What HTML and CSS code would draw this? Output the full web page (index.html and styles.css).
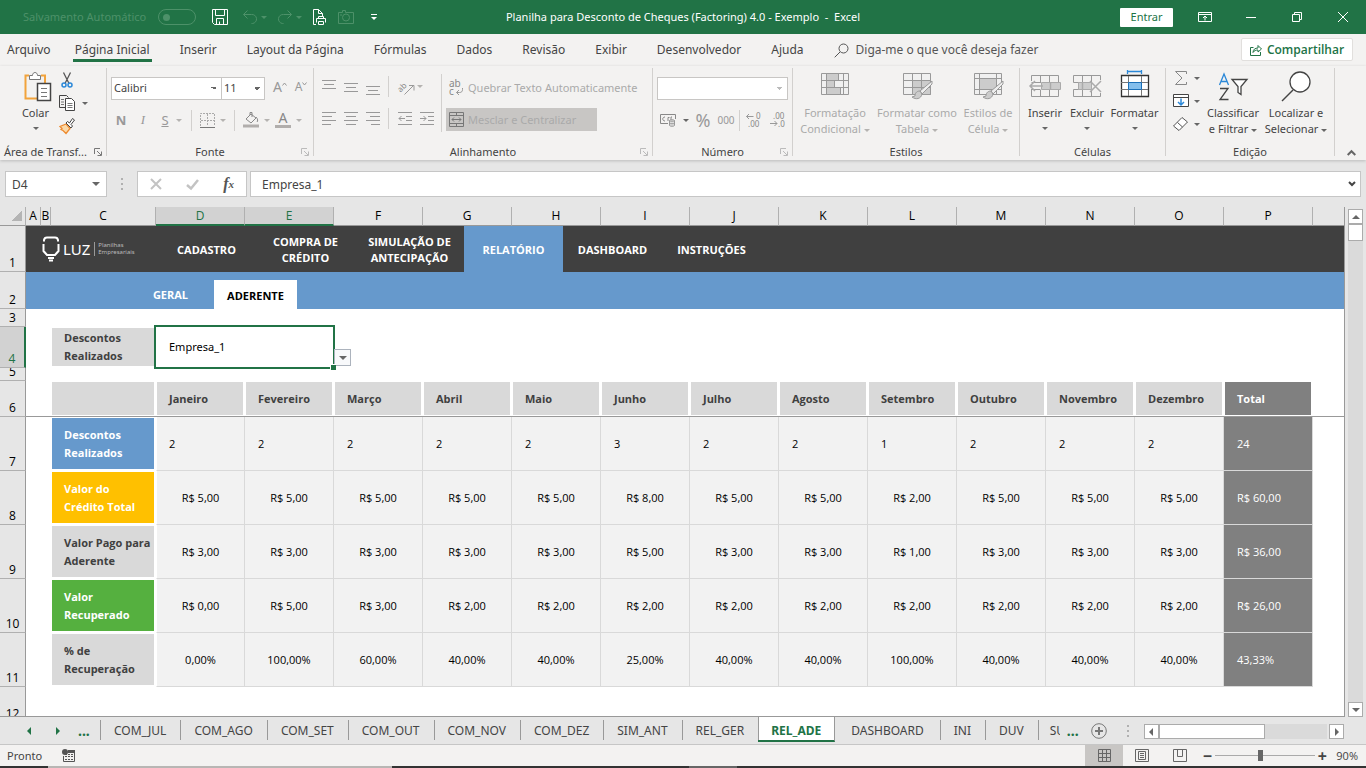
FILE: index.html
```html
<!DOCTYPE html>
<html lang="pt-BR">
<head>
<meta charset="utf-8">
<title>Planilha para Desconto de Cheques (Factoring) 4.0 - Exemplo - Excel</title>
<link rel="stylesheet" href="styles.css">
</head>
<body>
<header class="titlebar">
  <div class="quick">
    <label class="autosave">Salvamento Automático <input type="checkbox" class="toggle" disabled></label>
    <button class="qb save" aria-label="Salvar"><svg width="16" height="16" viewBox="0 0 16 16"><path d="M.5.5h15v15h-13l-2-2zM3.500.5v6h9v-6M4.500 15.500v-6h7v6M7.500 15v-2.500"/></svg></button>
    <button class="qb dim" aria-label="Desfazer"><svg width="16" height="16" viewBox="0 0 16 16"><path d="M5.500 1.500l-4 4 4 4M1.500 5.500h8a4.500 4.500 0 0 1 1 9h-1"/></svg><i class="caret"></i></button>
    <button class="qb dim" aria-label="Refazer"><svg width="16" height="16" viewBox="0 0 16 16"><path d="M10.500 1.500l4 4-4 4M14.500 5.500h-8a4.500 4.500 0 0 0-1 9h1"/></svg><i class="caret"></i></button>
    <button class="qb" aria-label="Imprimir"><svg width="16" height="16" viewBox="0 0 16 16"><path d="M4 15.500H1.500V.5h5l4 4v3M6.500.5v4h4M6.500 10V7.500h5V10M4.500 13.500v-4h9v4M6.500 12.500h5v3h-5z"/></svg></button>
    <button class="qb dim" aria-label="Câmera"><svg width="16" height="14" viewBox="0 0 16 14"><path d="M.5 2.500h4v-2h3v2h8v11H.5z"/><circle cx="8" cy="7.500" r="3.500"/><path d="M2 5h2"/></svg></button>
    <button class="qb more" aria-label="Personalizar"><svg width="6" height="8" viewBox="0 0 6 8"><path d="M0 1.500h6"/><path class="fill" d="M0 4h6L3 7z"/></svg></button>
  </div>
  <h1 class="title">Planilha para Desconto de Cheques (Factoring) 4.0 - Exemplo &nbsp;-&nbsp; Excel</h1>
  <div class="wincontrols">
    <button class="signin">Entrar</button>
    <button class="wb" aria-label="Opções da faixa"><svg width="14" height="12" viewBox="0 0 14 12"><path d="M.5 1.500h13v9H.5zM1 3.500h12M7 9.500V5.500M5 7l2-2 2 2"/></svg></button>
    <button class="wb" aria-label="Minimizar"><svg width="12" height="12" viewBox="0 0 12 12"><path d="M1 6.500h10"/></svg></button>
    <button class="wb" aria-label="Restaurar"><svg width="12" height="12" viewBox="0 0 12 12"><path d="M1.500 3.500h7v7h-7zM3.500 3V1.500h7v7H9"/></svg></button>
    <button class="wb" aria-label="Fechar"><svg width="12" height="12" viewBox="0 0 12 12"><path d="M1 1l10 10M11 1L1 11"/></svg></button>
  </div>
</header>

<nav class="tabs">
  <a href="#" class="tab first">Arquivo</a>
  <a href="#" class="tab on">Página Inicial</a>
  <a href="#" class="tab">Inserir</a>
  <a href="#" class="tab">Layout da Página</a>
  <a href="#" class="tab">Fórmulas</a>
  <a href="#" class="tab">Dados</a>
  <a href="#" class="tab">Revisão</a>
  <a href="#" class="tab">Exibir</a>
  <a href="#" class="tab">Desenvolvedor</a>
  <a href="#" class="tab">Ajuda</a>
  <a href="#" class="tab tell"><svg width="15" height="15" viewBox="0 0 15 15"><circle cx="9.500" cy="5.500" r="4.500"/><path d="M6 9L.7 14.300"/></svg>Diga-me o que você deseja fazer</a>
  <button class="share"><svg width="12" height="12" viewBox="0 0 12 12"><path d="M3.500 3.500h-3v8h10V8M3 8.500c0-3 2-4.500 5-4.500V1.500l3.500 3.500L8 8V6C6 6 4 6.500 3 8.500z"/></svg>Compartilhar</button>
</nav>

<section class="ribbon">
  <div class="group g-clip">
    <div class="gbody">
      <button class="big paste"><svg width="28" height="32" viewBox="0 0 28 32"><path d="M5 4.500H1.500v23H13M17 4.500h4V12" stroke="#f2a33c" stroke-width="2"/><path d="M5.500 8.500v-4h3c0-4 5-4 5 0h3v4z" fill="#fff" stroke="#777"/><path d="M13.500 12.500h13v17h-13z" fill="#fff" stroke="#444" stroke-width="1.500"/><path d="M17 17.500h6M17 21.500h6M17 25.500h6" stroke="#777"/></svg><span>Colar</span><i class="caret"></i></button>
      <div class="stack">
        <button class="ib" aria-label="Recortar"><svg width="16" height="16" viewBox="0 0 16 16"><path d="M4.500.5l5.500 11M11.500.5L6 11.500" stroke="#555" stroke-width="1.300"/><circle cx="5" cy="13" r="2" stroke="#2b88d8" stroke-width="1.500"/><circle cx="11" cy="13" r="2" stroke="#2b88d8" stroke-width="1.500"/></svg></button>
        <button class="ib" aria-label="Copiar"><svg width="16" height="16" viewBox="0 0 16 16"><path d="M6 12.500H.5V.5h7l2 2" stroke="#444"/><path d="M2 4.500h3M2 7h3M2 9.500h3" stroke="#777"/><path d="M6.500 3.500h6l3 3v9h-9z" fill="#fff" stroke="#444"/><path d="M8.500 8.500h5M8.500 10.500h5M8.500 12.500h5" stroke="#777"/></svg><i class="caret"></i></button>
        <button class="ib" aria-label="Pincel"><svg width="16" height="16" viewBox="0 0 16 16"><path d="M7 6L1 8.500l2 2-1 1 2 1 3 3 4-5z" fill="#fbd9a8" stroke="#ee8b30" stroke-width="1.300"/><path d="M7 5l5 5 1.500-2L12 6.500 15.500 2 13.500.5 10.500 5 8.500 3.500z" fill="#fff" stroke="#444"/></svg></button>
      </div>
    </div>
    <div class="glabel">Área de Transf...<svg class="launch dark" width="8" height="8" viewBox="0 0 8 8"><path d="M.5 6V.5H6M3 3l4 4M7.500 3.500v4h-4"/></svg></div>
  </div>

  <div class="group g-font">
    <div class="gbody col">
      <div class="row top">
        <select class="combo fname" aria-label="Fonte"><option>Calibri</option></select>
        <select class="combo fsize" aria-label="Tamanho"><option>11</option></select>
        <button class="lb grow" aria-label="Aumentar fonte">A<svg width="5" height="4" viewBox="0 0 5 4"><path d="M.5 3.500l2-2.500 2 2.500"/></svg></button>
        <button class="lb shrink" aria-label="Diminuir fonte">A<svg width="5" height="4" viewBox="0 0 5 4"><path d="M.5.5l2 2.500 2-2.500"/></svg></button>
      </div>
      <div class="row fmt">
        <button class="lb"><b>N</b></button>
        <button class="lb serif"><em>I</em></button>
        <button class="lb"><u>S</u></button><i class="caret pale"></i>
        <i class="vsep"></i>
        <button class="ib pale" aria-label="Bordas"><svg width="15" height="15" viewBox="0 0 15 15"><path d="M.5 13V.5h14V13M7.500 1v12M1 7.500h13" stroke-dasharray="2 1"/><path d="M0 14.500h15" stroke="#777"/></svg><i class="caret"></i></button>
        <i class="vsep"></i>
        <button class="ib pale" aria-label="Cor de preenchimento"><svg width="16" height="16" viewBox="0 0 16 16"><path d="M3 7l5-5 5 4-5 5zM7 3V.5h2V5M13 5c2 2 2 4 1 5" stroke="#888"/><path d="M0 12.500h16v3H0z" fill="#b1aeac" stroke="none"/></svg><i class="caret"></i></button>
        <button class="ib pale"><span class="fontcolor">A</span><i class="caret"></i></button>
      </div>
    </div>
    <div class="glabel">Fonte<svg class="launch" width="8" height="8" viewBox="0 0 8 8"><path d="M.5 6V.5H6M3 3l4 4M7.500 3.500v4h-4"/></svg></div>
  </div>

  <div class="group g-align">
    <div class="gbody">
      <div class="alignrows">
        <div class="row">
          <button class="ab" aria-label="Alinhar em cima"><svg width="14" height="16" viewBox="0 0 14 16"><path d="M0 1.500h14M2 5.500h10M0 9.500h14"/></svg></button>
          <button class="ab" aria-label="Alinhar no meio"><svg width="14" height="16" viewBox="0 0 14 16"><path d="M0 4.500h14M2 8.500h10M0 12.500h14"/></svg></button>
          <button class="ab" aria-label="Alinhar embaixo"><svg width="14" height="16" viewBox="0 0 14 16"><path d="M0 7.500h14M2 11.500h10M0 15.500h14"/></svg></button>
          <i class="vsep"></i>
          <button class="ib pale orient"><svg width="17" height="16" viewBox="0 0 17 16"><text x="-1" y="11" transform="rotate(-45 4 8)" class="tiny">ab</text><path d="M6.500 15.500l9-9M11 6.500h5v5" stroke="#999"/></svg><i class="caret"></i></button>
        </div>
        <div class="row">
          <button class="ab" aria-label="Esquerda"><svg width="14" height="14" viewBox="0 0 14 14"><path d="M0 .5h14M0 4.500h10M0 8.500h14M0 12.500h9"/></svg></button>
          <button class="ab" aria-label="Centro"><svg width="14" height="14" viewBox="0 0 14 14"><path d="M0 .5h14M2 4.500h10M0 8.500h14M2 12.500h10"/></svg></button>
          <button class="ab" aria-label="Direita"><svg width="14" height="14" viewBox="0 0 14 14"><path d="M0 .5h14M4 4.500h10M0 8.500h14M5 12.500h9"/></svg></button>
          <i class="vsep"></i>
          <button class="ab" aria-label="Diminuir recuo"><svg width="14" height="14" viewBox="0 0 14 14"><path d="M0 .5h14M8 4.500h6M8 8.500h6M0 12.500h14M1 6.500h6M3.500 4l-2.500 2.500 2.500 2.500"/></svg></button>
          <button class="ab" aria-label="Aumentar recuo"><svg width="14" height="14" viewBox="0 0 14 14"><path d="M0 .5h14M8 4.500h6M8 8.500h6M0 12.500h14M0 6.500h6M3.500 4l2.500 2.500-2.500 2.500"/></svg></button>
        </div>
      </div>
      <div class="wraps">
        <button class="wide"><svg width="15" height="16" viewBox="0 0 15 16"><text x="0" y="7" class="tiny big-ab">ab</text><text x="0" y="15" class="tiny big-ab">c</text><path d="M13.500 8v1.500c0 2-1 3-3 3H7.500M10 10l-2.500 2.500L10 15" stroke="#999"/></svg>Quebrar Texto Automaticamente</button>
        <button class="wide merged"><svg width="15" height="15" viewBox="0 0 15 15"><path d="M.5.5h14v14H.5zM.5 3.500h14M.5 11.500h14M7.500 1v2M7.500 12v2M3 7.500h9M5 5.500l-2 2 2 2M10 5.500l2 2-2 2" stroke="#777"/></svg>Mesclar e Centralizar</button>
      </div>
    </div>
    <div class="glabel">Alinhamento<svg class="launch" width="8" height="8" viewBox="0 0 8 8"><path d="M.5 6V.5H6M3 3l4 4M7.500 3.500v4h-4"/></svg></div>
  </div>

  <div class="group g-num">
    <div class="gbody col">
      <div class="row top"><select class="combo fnum" aria-label="Formato de número"><option></option></select></div>
      <div class="row nums">
        <button class="ib" aria-label="Moeda"><svg width="16" height="14" viewBox="0 0 16 14"><path d="M8 10.500H.5v-9h15V6M5 4c-3 0-3 4 0 4M8 8V4.500h1.500M12 4h-1v3" stroke="#888"/><path d="M9.500 7.500v5c0 1 5 1 5 0v-5M9.500 7.500c0-1 5-1 5 0s-5 1-5 0M9.500 10c0 1 5 1 5 0" fill="#ddd" stroke="#999"/></svg><i class="caret"></i></button>
        <button class="lb pct">%</button>
        <button class="lb mil">000</button>
        <i class="vsep"></i>
        <button class="ab"><svg width="15" height="16" viewBox="0 0 15 16"><text x="10" y="7" class="tiny">0</text><text x="2" y="15" class="tiny">.00</text><path d="M.5 4.500h7M3 2L.5 4.500 3 7"/></svg></button>
        <button class="ab"><svg width="15" height="16" viewBox="0 0 15 16"><text x="3" y="7" class="tiny">.00</text><text x="8" y="15" class="tiny">.0</text><path d="M0 11.500h7M4.500 9L7 11.500 4.500 14"/></svg></button>
      </div>
    </div>
    <div class="glabel">Número<svg class="launch" width="8" height="8" viewBox="0 0 8 8"><path d="M.5 6V.5H6M3 3l4 4M7.500 3.500v4h-4"/></svg></div>
  </div>

  <div class="group g-style">
    <div class="gbody">
      <button class="big off"><svg width="30" height="30" viewBox="0 0 30 30"><path d="M1.500 3.500h27v21h-27z" fill="#f0f0f0"/><path d="M6.500 3.500h12v7h-12zM6.500 10.500h8v7h-8zM6.500 17.500h14v7h-14z" fill="#ccc"/><path d="M1 10.500h27M1 17.500h27M6.500 4v20M23.500 4v20"/></svg><span>Formatação<br>Condicional <i class="caret"></i></span></button>
      <button class="big off"><svg width="30" height="30" viewBox="0 0 30 30"><path d="M1.500 3.500h27v21h-27z" fill="#f0f0f0"/><path d="M10.500 10.500h18v14h-18z" fill="#ccc"/><path d="M1 10.500h27M1 17.500h27M10.500 4v20M19.500 4v20"/><path d="M30 11L18 21l2 3 10-10z" fill="#eee"/><path d="M18 21c-4 0-5 3-5 5l-3 1c4 3 9 2 10-3z" fill="#ccc"/></svg><span>Formatar como<br>Tabela <i class="caret"></i></span></button>
      <button class="big off"><svg width="30" height="30" viewBox="0 0 30 30"><path d="M1.500 3.500h27v21h-27z" fill="#f0f0f0"/><path d="M6.500 8.500h17v11h-17z" fill="#ccc"/><path d="M1 8.500h27M1 19.500h27M6.500 4v20M23.500 4v20"/><path d="M30 11L18 21l2 3 10-10z" fill="#eee"/><path d="M18 21c-4 0-5 3-5 5l-3 1c4 3 9 2 10-3z" fill="#ccc"/></svg><span>Estilos de<br>Célula <i class="caret"></i></span></button>
    </div>
    <div class="glabel">Estilos</div>
  </div>

  <div class="group g-cells">
    <div class="gbody">
      <button class="big"><svg width="32" height="30" viewBox="0 0 32 30"><path d="M2.500 9V3.500h27V11M2.500 17v7.500h27V18M11.500 3.500V11M20.500 3.500V11M11.500 18v7M20.500 18v7M2.500 10.500h9M2.500 17.500h9" stroke="#999"/><path d="M12.500 10.500h19v7h-19z" fill="#ccc" stroke="#aaa"/><path d="M21.500 10.500v7M1 14h13M6 9l-5 5 5 5" stroke="#aaa" stroke-width="1.500"/></svg><span>Inserir</span><i class="caret"></i></button>
      <button class="big"><svg width="32" height="30" viewBox="0 0 32 30"><path d="M2.500 10.500v-7h27V8M2.500 17.500v7h27V21M11.500 3.500v7M20.500 3.500v7M11.500 18v7M20.500 18v7M2.500 10.500h18M2.500 17.500h18" stroke="#999"/><path d="M7.500 10.500h13v7h-13z" fill="#ccc" stroke="#aaa"/><path d="M19 9l11 11M30 9L19 20M11.500 11v6" stroke="#aaa" stroke-width="1.500"/></svg><span>Excluir</span><i class="caret"></i></button>
      <button class="big"><svg width="32" height="30" viewBox="0 0 32 30"><path d="M8 -.5h15M8.500-2v4M22.500-2v4" stroke="#2b88d8" stroke-width="1.300"/><path d="M2.500 3.500h27v21h-27z" fill="#fff" stroke="#333" stroke-width="1.300"/><path d="M2 10.500h27M2 17.500h27M9.500 4v20M22.500 4v20" stroke="#777"/><path d="M9.500 10.500h13v7h-13z" fill="#83beec" stroke="#1a6fb8"/></svg><span>Formatar</span><i class="caret"></i></button>
    </div>
    <div class="glabel">Células</div>
  </div>

  <div class="group g-edit">
    <div class="gbody">
      <div class="stack">
        <button class="ib" aria-label="Soma"><svg width="18" height="16" viewBox="0 0 18 16"><path d="M13.500 4V1.500h-11L9 8l-6.500 6.500h11V12" stroke="#888"/></svg><i class="caret"></i></button>
        <button class="ib" aria-label="Preencher"><svg width="18" height="16" viewBox="0 0 18 16"><path d="M.5 1.500h15v12H.5z" fill="#fff" stroke="#444"/><path d="M1 4.500h15" stroke="#444"/><path d="M8 5.500v6M5 9l3 3 3-3" stroke="#2b88d8" stroke-width="1.500"/></svg><i class="caret"></i></button>
        <button class="ib" aria-label="Limpar"><svg width="18" height="16" viewBox="0 0 18 16"><path d="M.5 10L9 1.500l5.500 4.500-8.500 8.500zM4.500 6.500l5 4.500" fill="#fff" stroke="#555"/></svg><i class="caret"></i></button>
      </div>
      <button class="big"><svg width="30" height="30" viewBox="0 0 30 30"><path d="M1.500 13L6 2l4.500 11M3 9.500h6" stroke="#2b88d8" stroke-width="1.300"/><path d="M2 16.500h8l-8 11h8.500" stroke="#444" stroke-width="1.300"/><path d="M14 7.500h15l-6 7v8l-3-2v-6z" fill="#fff" stroke="#444" stroke-width="1.300"/></svg><span>Classificar<br>e Filtrar <i class="caret"></i></span></button>
      <button class="big"><svg width="32" height="30" viewBox="0 0 32 30"><circle cx="20" cy="10" r="10" fill="#fff" stroke="#444" stroke-width="1.300"/><path d="M13 18L2 29" stroke="#444" stroke-width="1.500"/></svg><span>Localizar e<br>Selecionar <i class="caret"></i></span></button>
    </div>
    <div class="glabel">Edição</div>
  </div>
  <button class="collapse" aria-label="Recolher"><svg width="9" height="6" viewBox="0 0 9 6"><path d="M.7 5l3.800-3.800L8.300 5"/></svg></button>
</section>

<section class="formulabar">
  <div class="namebox"><input type="text" value="D4" aria-label="Caixa de nome"><i class="caret"></i></div>
  <svg class="dots" width="2" height="12" viewBox="0 0 2 12"><path d="M0 0h2v2H0zM0 5h2v2H0zM0 10h2v2H0z"/></svg>
  <div class="fxbox">
    <button aria-label="Cancelar"><svg width="12" height="12" viewBox="0 0 12 12"><path d="M1 1l10 10M11 1L1 11"/></svg></button>
    <button aria-label="Inserir"><svg width="13" height="11" viewBox="0 0 13 11"><path stroke-width="2.500" d="M1 6l4 3.500L12 1"/></svg></button>
    <button class="fx" aria-label="Inserir função">f<sub>x</sub></button>
  </div>
  <div class="formula"><input type="text" value="Empresa_1" aria-label="Barra de fórmulas"><svg width="8" height="6" viewBox="0 0 8 6"><path d="M1 1l3 3 3-3"/></svg></div>
</section>

<main class="work">
  <div class="sheet">
    <table class="grid">
      <colgroup><col class="w-rh"><col class="w-a"><col class="w-b"><col class="w-c"><col class="w-m" span="13"><col></colgroup>
      <thead>
        <tr class="letters"><th class="corner"></th><th>A</th><th>B</th><th>C</th><th class="sel">D</th><th class="sel">E</th><th>F</th><th>G</th><th>H</th><th>I</th><th>J</th><th>K</th><th>L</th><th>M</th><th>N</th><th>O</th><th>P</th><th class="end"></th></tr>
      </thead>
      <tbody>
        <tr class="r1"><th>1</th><td colspan="17" class="darkrow">
          <nav class="mainnav">
            <div class="logo"><svg width="18" height="26" viewBox="0 0 18 26"><path d="M2 5.500V4a3 3 0 0 1 3-2.500h8A3 3 0 0 1 16 4v1.500M1.500 8v7l3.500 4h8l3.500-4V8"/><path d="M6 22h6M7 24.500h4"/></svg><strong>LUZ</strong><small>Planilhas<br>Empresariais</small></div>
            <a href="#">CADASTRO</a><a href="#">COMPRA DE CRÉDITO</a><a href="#" class="long">SIMULAÇÃO DE ANTECIPAÇÃO</a><a href="#" class="on">RELATÓRIO</a><a href="#">DASHBOARD</a><a href="#">INSTRUÇÕES</a>
          </nav></td></tr>
        <tr class="r2"><th>2</th><td colspan="17" class="bluerow"><nav class="subnav"><a href="#">GERAL</a><a href="#" class="on">ADERENTE</a></nav></td></tr>
        <tr class="r3"><th>3</th><td colspan="17"></td></tr>
        <tr class="r4"><th class="sel">4</th><td></td><td></td><td class="lab"><div class="tag">Descontos Realizados</div></td><td colspan="2" class="picked">Empresa_1<button class="drop" aria-label="Abrir lista"><i class="caret"></i></button></td><td colspan="12"></td></tr>
        <tr class="r5"><th><div class="clip">5</div></th><td colspan="17"></td></tr>
        <tr class="r6"><th>6</th><td></td><td></td><td class="cap"><div></div></td><td class="cap"><div>Janeiro</div></td><td class="cap"><div>Fevereiro</div></td><td class="cap"><div>Março</div></td><td class="cap"><div>Abril</div></td><td class="cap"><div>Maio</div></td><td class="cap"><div>Junho</div></td><td class="cap"><div>Julho</div></td><td class="cap"><div>Agosto</div></td><td class="cap"><div>Setembro</div></td><td class="cap"><div>Outubro</div></td><td class="cap"><div>Novembro</div></td><td class="cap"><div>Dezembro</div></td><td class="cap total"><div>Total</div></td><td></td></tr>
        <tr class="data left"><th>7</th><td></td><td></td><td class="lab"><div class="tag blue">Descontos<br>Realizados</div></td><td class="v">2</td><td class="v">2</td><td class="v">2</td><td class="v">2</td><td class="v">2</td><td class="v">3</td><td class="v">2</td><td class="v">2</td><td class="v">1</td><td class="v">2</td><td class="v">2</td><td class="v">2</td><td class="v sum">24</td><td></td></tr>
        <tr class="data"><th>8</th><td></td><td></td><td class="lab"><div class="tag gold">Valor do<br>Crédito Total</div></td><td class="v">R$ 5,00</td><td class="v">R$ 5,00</td><td class="v">R$ 5,00</td><td class="v">R$ 5,00</td><td class="v">R$ 5,00</td><td class="v">R$ 8,00</td><td class="v">R$ 5,00</td><td class="v">R$ 5,00</td><td class="v">R$ 2,00</td><td class="v">R$ 5,00</td><td class="v">R$ 5,00</td><td class="v">R$ 5,00</td><td class="v sum">R$ 60,00</td><td></td></tr>
        <tr class="data"><th>9</th><td></td><td></td><td class="lab"><div class="tag">Valor Pago para<br>Aderente</div></td><td class="v">R$ 3,00</td><td class="v">R$ 3,00</td><td class="v">R$ 3,00</td><td class="v">R$ 3,00</td><td class="v">R$ 3,00</td><td class="v">R$ 5,00</td><td class="v">R$ 3,00</td><td class="v">R$ 3,00</td><td class="v">R$ 1,00</td><td class="v">R$ 3,00</td><td class="v">R$ 3,00</td><td class="v">R$ 3,00</td><td class="v sum">R$ 36,00</td><td></td></tr>
        <tr class="data"><th>10</th><td></td><td></td><td class="lab"><div class="tag green">Valor<br>Recuperado</div></td><td class="v">R$ 0,00</td><td class="v">R$ 5,00</td><td class="v">R$ 3,00</td><td class="v">R$ 2,00</td><td class="v">R$ 2,00</td><td class="v">R$ 2,00</td><td class="v">R$ 2,00</td><td class="v">R$ 2,00</td><td class="v">R$ 2,00</td><td class="v">R$ 2,00</td><td class="v">R$ 2,00</td><td class="v">R$ 2,00</td><td class="v sum">R$ 26,00</td><td></td></tr>
        <tr class="data"><th>11</th><td></td><td></td><td class="lab"><div class="tag">% de<br>Recuperação</div></td><td class="v">0,00%</td><td class="v">100,00%</td><td class="v">60,00%</td><td class="v">40,00%</td><td class="v">40,00%</td><td class="v">25,00%</td><td class="v">40,00%</td><td class="v">40,00%</td><td class="v">100,00%</td><td class="v">40,00%</td><td class="v">40,00%</td><td class="v">40,00%</td><td class="v sum">43,33%</td><td></td></tr>
        <tr class="r12"><th>12</th><td colspan="17"></td></tr>
      </tbody>
    </table>
  </div>
  <div class="vscroll"><button aria-label="Rolar para cima"><i class="tri up"></i></button><div class="vthumb"></div><div class="vtrack"></div><button aria-label="Rolar para baixo"><i class="tri down"></i></button></div>
</main>

<nav class="sheettabs">
  <div class="nav-arrows"><button aria-label="Anterior"><i class="tri lft"></i></button><button aria-label="Próxima"><i class="tri rgt"></i></button><span class="ell">...</span></div>
  <a href="#">COM_JUL</a><a href="#">COM_AGO</a><a href="#">COM_SET</a><a href="#">COM_OUT</a><a href="#">COM_NOV</a><a href="#">COM_DEZ</a><a href="#">SIM_ANT</a><a href="#">REL_GER</a><a href="#" class="on">REL_ADE</a><a href="#">DASHBOARD</a><a href="#">INI</a><a href="#">DUV</a><a href="#" class="cut">SUG</a>
  <span class="ell">...</span>
  <button class="add" aria-label="Nova planilha"><svg width="16" height="16" viewBox="0 0 16 16"><circle cx="8" cy="8" r="7.300"/><path stroke-width="2" d="M8 4v8M4 8h8"/></svg></button>
  <svg class="dots" width="2" height="12" viewBox="0 0 2 12"><path d="M0 0h2v2H0zM0 5h2v2H0zM0 10h2v2H0z"/></svg>
  <div class="hscroll"><button aria-label="Rolar para a esquerda"><i class="tri lft"></i></button><div class="hthumb"></div><div class="htrack"></div><button aria-label="Rolar para a direita"><i class="tri rgt"></i></button></div>
</nav>

<footer class="status">
  <span>Pronto</span>
  <svg class="macro" width="13" height="13" viewBox="0 0 13 13"><path d="M6 1.500h6.500v11h-11V7" fill="none" stroke="#555"/><path d="M6 1h7v3H6z" fill="#555"/><circle cx="3" cy="3" r="3" fill="#555"/><path d="M3 7.500h8M3 10.500h8M3 5.500h8" stroke="#555" stroke-dasharray="2 1"/></svg>
  <div class="views">
    <button class="vb on" aria-label="Normal"><svg width="13" height="13" viewBox="0 0 13 13"><path d="M.5.5h12v12H.5zM4.500 0v13M8.500 0v13M0 4.500h13M0 8.500h13"/></svg></button>
    <button class="vb" aria-label="Layout da Página"><svg width="14" height="13" viewBox="0 0 14 13"><path d="M.5.5h13v12H.5zM3.500 2.500h7v8h-7zM5 4.500h4M5 6.500h4M5 8.500h4"/></svg></button>
    <button class="vb" aria-label="Quebra de página"><svg width="14" height="13" viewBox="0 0 14 13"><path d="M.5.5h13v12H.5zM4.500 1v6.500h5V1"/></svg></button>
  </div>
  <button class="zb" aria-label="Menos zoom">−</button>
  <input class="zoom" type="range" min="10" max="170" value="82" aria-label="Zoom">
  <button class="zb" aria-label="Mais zoom">+</button>
  <span class="pctz">90%</span>
</footer>
<div class="taskedge"></div>
</body>
</html>
```
FILE: styles.css
```css
* { box-sizing: border-box; }
html, body { height: 100%; }
body {
  margin: 0; display: flex; flex-direction: column; overflow: hidden;
  font-family: "Noto Sans", "Open Sans", sans-serif; font-size: 11px; line-height: 16px; color: #444;
  background: #e6e6e6;
}
button, input, select { font: inherit; color: inherit; }
button { background: none; border: 0; padding: 0; display: flex; align-items: center; justify-content: center; }
a { color: inherit; text-decoration: none; white-space: nowrap; }
svg { fill: none; stroke: currentColor; flex: none; display: block; overflow: visible; }
.caret { display: inline-block; flex: none; width: 0; height: 0; border: 3px solid transparent; border-top: 3px solid #666; border-bottom: 0; vertical-align: middle; }
.pale, .caret.pale { color: #aaa; }
.caret.pale, .pale .caret, .off .caret { border-top-color: #b5b3b1; }

/* title bar */
.titlebar { flex: none; height: 34px; background: #217346; color: #fff; display: grid; grid-template-columns: 1fr auto 1fr; align-items: center; }
.title { margin: 0; font-size: 11px; font-weight: 400; white-space: nowrap; }
.quick { display: flex; align-items: center; padding-left: 23px; gap: 10px; }
.autosave { display: flex; align-items: center; gap: 12px; color: #4d9169; white-space: nowrap; }
.toggle { appearance: none; margin: 0 6px 0 0; width: 38px; height: 16px; border: 1px solid #4d9169; border-radius: 8px; display: flex; align-items: center; padding-left: 4px; }
.toggle::before { content: ""; width: 7px; height: 7px; border-radius: 50%; background: #4d9169; }
.qb { gap: 3px; }
.qb.save { margin-right: 4px; }
.qb .caret { border-top-color: currentColor; }
.qb.dim { color: #4d9169; }
.qb.more { margin-left: 7px; }
.fill { fill: currentColor; stroke: none; }
.wincontrols { display: flex; justify-content: flex-end; align-items: center; padding-right: 17px; }
.wb { width: 12px; margin-left: 34px; }
.signin { width: 53px; height: 19px; background: #fff; color: #217346; border-radius: 1px; margin-right: -8px; }

/* ribbon tabs */
.tabs { flex: none; height: 32px; background: #f3f2f1; display: flex; align-items: stretch; gap: 30px; padding: 0 13px 0 7px; font-size: 12px; }
.tab { line-height: 32px; }
.tab.first { margin-right: -6px; }
.tab.on { border-bottom: 3px solid #217346; height: 28px; margin: 0 -2px; padding: 0 2px; }
.tab.tell { display: flex; align-items: center; gap: 7px; height: 32px; color: #555; }
.share { margin: 4px 0 0 auto; width: 112px; height: 23px; background: #fff; border: 1px solid #e1dfdd; border-radius: 2px; color: #217346; font-family: "Open Sans", sans-serif; font-weight: 600; gap: 5px; }

/* ribbon */
.ribbon { flex: none; height: 94px; background: #f3f2f1; display: flex; padding-top: 2px; position: relative; box-shadow: 0 1px 3px #bbb; }
.group { display: flex; flex-direction: column; height: 88px; border-right: 1px solid #d2d0ce; flex: none; }
.gbody { flex: 1; display: flex; align-items: flex-start; }
.gbody.col { flex-direction: column; }
.glabel { height: 16px; margin-bottom: -4px; line-height: 16px; text-align: center; position: relative; white-space: nowrap; }
.launch { position: absolute; right: 4px; bottom: 4px; color: #bbb; }
.launch.dark { color: #777; }
.row { display: flex; align-items: center; }
.ib { gap: 7px; height: 16px; }
.stack { display: flex; flex-direction: column; align-items: flex-start; gap: 7px; }
.big { flex-direction: column; line-height: 16px; }
.big svg { margin-bottom: 5px; }
.big > .caret { margin-top: 6px; }
.off { color: #aaa; }
.vsep { width: 1px; height: 21px; background: #d2d0ce; }
.lb { color: #999; font-size: 13px; height: 18px; width: 22px; }

.g-clip { width: 107px; }
.g-clip .gbody { padding-left: 17px; }
.paste { width: 37px; padding-top: 3px; }
.paste svg { margin: 0 0 2px 4px; }
.g-clip .stack { padding: 4px 0 0 5px; }
.g-clip .glabel { text-align: left; padding-left: 4px; }
.g-font { width: 207px; }
.row.top { height: 40px; }
.g-font .row { padding-left: 4px; }
.g-font .row.fmt { height: 22px; padding-left: 3px; margin-top: 1px; }
.fmt .vsep { margin: 0 8px; }
.fmt .caret { margin-right: 1px; }
.fmt .ib { margin-right: 4px; gap: 5px; }
.fmt .ib + .vsep { margin-left: 3px; }
.serif { font-family: "Liberation Serif", serif; }
.combo {
  appearance: none; height: 23px; border: 1px solid #c8c6c4; border-radius: 0; padding: 0 4px 0 2px; font-size: 11px; background-color: #fff;
  background-image: linear-gradient(to bottom right, #666 50%, transparent 50%), linear-gradient(to bottom left, #666 50%, transparent 50%);
  background-size: 3px 3px; background-repeat: no-repeat; background-position: right 4px top 9px, right 7px top 9px;
}
.fname { width: 111px; }
.fsize { width: 43px; margin: 0 5px 0 0; border-left: 0; }
.fnum { width: 131px; margin-left: 4px; background-image: linear-gradient(to bottom right, #bbb 50%, transparent 50%), linear-gradient(to bottom left, #bbb 50%, transparent 50%); }
.grow { align-items: flex-start; font-size: 14px; }
.shrink { align-items: flex-start; font-size: 12px; }
.grow, .shrink { margin-left: -1px; }
.grow svg, .shrink svg { margin-top: 3px; }
.fontcolor { width: 16px; height: 16px; border-bottom: 3px solid #b1aeac; font-size: 14px; line-height: 12px; color: #888; }
.g-align { width: 339px; }
.alignrows { padding: 2px 0 0 8px; margin-top: 6px; width: 128px; height: 58px; display: flex; flex-direction: column; gap: 11px; border-right: 1px solid #d2d0ce; }
.alignrows .row { gap: 8px; height: 21px; }
.alignrows .vsep { margin-right: 1px; }
.orient { gap: 2px; }
.ab { color: #999; }
.tiny { font-size: 8px; fill: #888; stroke: none; }
.big-ab { font-size: 10px; }
.wraps { padding: 8px 0 0 4px; display: flex; flex-direction: column; gap: 9px; }
.wide { height: 23px; padding: 0 3px; gap: 4px; color: #aaa; justify-content: flex-start; white-space: nowrap; }
.merged { background: #c8c6c4; width: 151px; }
.g-num { width: 140px; }
.g-num .nums { height: 22px; padding-left: 7px; margin-top: 1px; }
.pct { font-size: 18px; width: 28px; }
.mil { font-size: 10px; width: 18px; }
.nums .ab { margin-left: 6px; }
.nums .ab:last-child { margin-left: 9px; }
.nums .vsep { margin-left: 4px; }
.g-style { width: 227px; }
.g-style .gbody { padding: 2px 0 0 5px; white-space: nowrap; }
.g-style .big:nth-child(1) { width: 74px; }
.g-style .big:nth-child(2) { width: 90px; }
.g-style .big:nth-child(3) { width: 52px; }
.off svg { color: #999; }
.g-cells { width: 146px; }
.g-cells .gbody { padding: 4px 0 0 4px; }
.g-cells .big { width: 42px; }
.g-cells .big svg, .g-edit .big svg { margin-bottom: 3px; }
.g-cells .big:nth-child(3) { width: 53px; }
.g-edit { width: 169px; }
.g-edit .gbody { padding-left: 7px; }
.g-edit .stack { padding-top: 2px; }
.g-edit .ib { gap: 3px; }
.g-edit .big { padding-top: 4px; white-space: nowrap; }
.g-edit .big:nth-child(2) { width: 66px; }
.g-edit .big:nth-child(3) { width: 60px; }
.collapse { margin: 0 10px 3px auto; align-self: flex-end; width: 9px; height: 9px; }
.collapse svg { stroke-width: 2; color: #666; }

/* formula bar */
.formulabar { flex: none; height: 47px; padding: 11px 5px 0; display: flex; align-items: flex-start; }
.namebox, .fxbox, .formula { height: 26px; border: 1px solid #c6c6c6; background: #fff; display: flex; align-items: center; }
.namebox { width: 102px; padding-right: 6px; }
.namebox .caret { border-width: 4px 4px 0; }
.formulabar input { border: 0; background: none; flex: 1; min-width: 0; font-size: 12px; padding: 0 0 0 6px; height: 24px; }
.dots { fill: #b0b0b0; stroke: none; }
.formulabar .dots { margin: 7px 14px 0; }
.fxbox { width: 110px; justify-content: space-between; padding: 0 12px; color: #c3c3c3; }
.fxbox svg { stroke-width: 2; }
.fx { font: italic 700 16px/16px "Liberation Serif", serif; color: #555; }
.fx sub { font-size: 11px; }
.formula { flex: 1; margin-left: 3px; padding-right: 4px; }
.formula input { padding-left: 11px; }
.formula svg { stroke-width: 2; }

/* worksheet */
.work { flex: 1 1 0; min-height: 0; display: flex; font-family: "Open Sans", sans-serif; }
.sheet { flex: 1; min-width: 0; overflow: hidden; border-right: 1px solid #999; border-bottom: 1px solid #999; }
.grid { table-layout: fixed; width: 100%; border-collapse: separate; border-spacing: 0; background: #fff; color: #000; }
.grid th, .grid td { padding: 0; }
.w-rh { width: 26px; } .w-a { width: 15px; } .w-b { width: 10px; } .w-c { width: 105px; } .w-m { width: 89px; }
.grid th { background: #e6e6e6; font-weight: 400; font-size: 12px; line-height: 16px; border-right: 1px solid #999; }
.letters { height: 19px; }
.grid .letters th { border-right-color: #b0b0b0; border-bottom: 1px solid #999; }
.grid .letters .end { border-right: 0; }
.grid .letters .sel { background: #d2d2d2; color: #217346; border-bottom: 2px solid #217346; }
.grid .letters .corner { background: linear-gradient(to bottom right, #e6e6e6 50%, #b4b4b4 50%) 12px 4px / 10px 10px no-repeat #e6e6e6; }
.grid tbody th { vertical-align: bottom; border-bottom: 1px solid #b0b0b0; }
.grid tbody .sel { background: #d2d2d2; color: #217346; border-right: 2px solid #217346; }
.r1 { height: 46px; } .r2 { height: 37px; } .r3 { height: 18px; } .r4 { height: 41px; } .r5 { height: 13px; } .r6 { height: 36px; } .data { height: 54px; } .r12 { height: 36px; }
.clip { height: 12px; overflow: hidden; display: flex; align-items: flex-end; justify-content: center; }
.darkrow { background: #404040; }
.bluerow { background: #6699cc; vertical-align: bottom; }
.mainnav { display: flex; height: 46px; color: #fff; font-weight: 700; }
.mainnav a { width: 99px; padding: 2px 8px 0; display: flex; align-items: center; justify-content: center; text-align: center; white-space: normal; }
.mainnav a.long { width: 109px; }
.mainnav a.on { background: #6699cc; }
.logo { width: 131px; padding-left: 16px; display: flex; align-items: center; gap: 3px; }
.logo svg { stroke-width: 2; }
.logo strong { font: 400 15px "Noto Sans", sans-serif; }
.logo small { font: 400 6px/7px "Noto Sans", sans-serif; border-left: 1px solid #999; margin-left: 1px; padding-left: 3px; color: #bbb; }
.subnav { display: flex; height: 29px; align-items: center; color: #fff; font-weight: 700; padding-left: 101px; }
.subnav a { width: 87px; line-height: 32px; text-align: center; }
.subnav a.on { width: 83px; height: 29px; background: #fff; color: #000; }
.tag { margin: 1px 2px 2px 1px; padding: 0 0 0 12px; height: 51px; background: #d9d9d9; color: #404040; font-weight: 700; line-height: 18px; display: flex; align-items: center; }
.data .tag { white-space: nowrap; }
.r4 .tag { height: 38px; }
.tag.blue { background: #6699cc; color: #fff; }
.tag.gold { background: #ffc000; color: #fff; }
.tag.green { background: #55b03f; color: #fff; }
.grid td.picked { padding: 0 0 2px 13px; position: relative; font-family: "Noto Sans", sans-serif; }
.picked::before { content: ""; position: absolute; inset: -2px -1px -1px -2px; border: 2px solid #217346; }
.picked::after { content: ""; position: absolute; right: -2px; bottom: -2px; width: 5px; height: 5px; background: #217346; border: solid #fff; border-width: 1px 0 0 1px; }
.drop { position: absolute; left: 100%; bottom: 2px; width: 17px; height: 17px; background: #f8f9fb; border: 1px solid #acb3bd; }
.drop .caret { border-width: 4px 4px 0; }
.r6 td { border-bottom: 1px solid #999; }
.grid td.cap { padding: 1px 2px 1px 1px; }
.cap div { height: 33px; background: #d9d9d9; color: #404040; font-weight: 700; line-height: 34px; padding-left: 12px; }
.cap.total div { background: #808080; color: #fff; }
.v { background: #f2f2f2; border-right: 1px solid #d9d9d9; border-bottom: 1px solid #d9d9d9; text-align: center; }
.lab + .v { border-left: 1px solid #fff; }
.left .v { text-align: left; }
.grid .left .v { padding-left: 13px; }
.grid .left .lab + .v { padding-left: 12px; }
.grid .v.sum { background: #808080; color: #fff; text-align: left; padding-left: 13px; }

.vscroll { flex: none; width: 21px; padding: 2px 3px 0; display: flex; flex-direction: column; }
.vscroll button { height: 15px; background: #fff; border: 1px solid #ababab; }
.vthumb { height: 17px; background: #fff; border: 1px solid #ababab; }
.vtrack { flex: 1; background: #dadada; }
.tri { width: 0; height: 0; border: 4px solid transparent; }
.up { border-top: 0; border-bottom-color: #666; }
.down { border-bottom: 0; border-top-color: #666; }
.lft { border-left: 0; border-right-color: #666; }
.rgt { border-right: 0; border-left-color: #666; }

/* sheet tabs */
.sheettabs { flex: none; height: 28px; display: flex; align-items: flex-start; border-bottom: 1px solid #c6c6c6; font-size: 12px; line-height: 27px; overflow: hidden; }
.sheettabs > a { position: relative; padding: 0 14px; height: 26px; flex: none; }
.sheettabs > a::before { content: ""; position: absolute; left: 0; top: 3px; width: 1px; height: 20px; background: #999; }
.sheettabs > a.on { background: #fff; color: #217346; font-weight: 700; border-bottom: 2px solid #217346; height: 25px; padding: 0 13px; border-right: 1px solid #999; }
.sheettabs > a.on::before { top: 0; height: 23px; }
.sheettabs > a.on + a { padding: 0 16px; }
.sheettabs > a.on + a::before { display: none; }
.sheettabs > a.cut { width: 22px; padding: 0 0 0 12px; overflow: hidden; }
.nav-arrows { width: 100px; padding-left: 27px; display: flex; align-items: center; height: 27px; gap: 25px; }
.nav-arrows .tri.lft { border-right-color: #217346; }
.nav-arrows .tri.rgt { border-left-color: #217346; }
.nav-arrows .ell { margin-left: -7px; }
.ell { color: #217346; font-weight: 700; font-size: 14px; margin-left: 7px; }
.add { margin: 6px 0 0 12px; color: #777; }
.sheettabs .dots { margin: 8px 14px 0 20px; }
.hscroll { flex: 1; display: flex; height: 15px; margin: 7px 22px 0 1px; }
.hscroll button { width: 15px; height: 15px; border: 1px solid #ababab; background: #fff; }
.hthumb { flex: 105; background: #fff; border: 1px solid #ababab; }
.htrack { flex: 63; background: #dadada; margin-right: 2px; }

/* status bar */
.status { flex: none; height: 21px; background: #f3f2f1; display: flex; align-items: center; padding: 0 8px 0 7px; }
.macro { margin-left: 20px; stroke: none; }
.views { margin-left: auto; display: flex; height: 21px; }
.vb { width: 38px; color: #666; }
.vb.on { background: #c8c6c4; }
.zb { font-size: 16px; font-weight: 700; width: 12px; }
.views + .zb { margin-left: 2px; }
.zoom { appearance: none; width: 100px; height: 12px; margin: 0 1px 0 2px; background: linear-gradient(#aaa, #aaa) center / 100% 1px no-repeat; }
.zoom::-webkit-slider-thumb { appearance: none; width: 5px; height: 11px; background: #666; }
.pctz { margin-left: 8px; font-family: "Open Sans", sans-serif; }
.taskedge { flex: none; height: 2px; background: linear-gradient(to right, #333 0 48px, #b8b6b4 48px 392px, #333 392px 689px, #666 689px 737px, #333 737px); }
```
